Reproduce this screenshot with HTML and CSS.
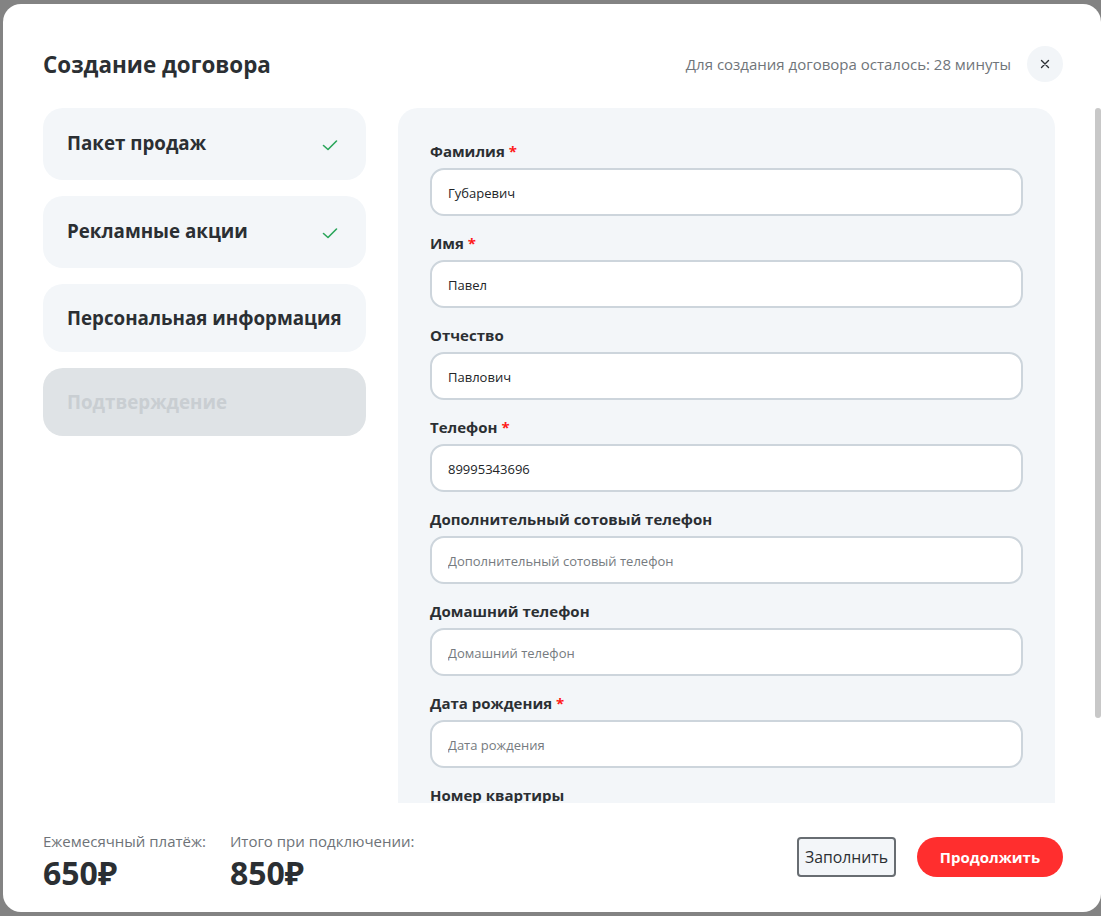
FILE: index.html
```html
<!DOCTYPE html>
<html lang="ru">
<head>
<meta charset="utf-8">
<title>Создание договора</title>
<link rel="stylesheet" href="styles.css">
</head>
<body>
<div class="modal">
  <header class="modal-header">
    <h1 class="title">Создание договора</h1>
    <div class="header-right">
      <span class="timer">Для создания договора осталось: 28 минуты</span>
      <button class="close" aria-label="Закрыть">
        <svg width="10" height="10" viewBox="0 0 10 10"><path d="M1.5 1.5 L8.5 8.5 M8.5 1.5 L1.5 8.5" stroke="#2b2f33" stroke-width="1.4" stroke-linecap="round"/></svg>
      </button>
    </div>
  </header>

  <div class="modal-body">
    <nav class="steps">
      <div class="step done"><span>Пакет продаж</span>
        <svg class="check" width="16" height="28" viewBox="0 0 16 28"><path d="M1.5 14.5 L6 18.5 L14.5 10" fill="none" stroke="#2aa55a" stroke-width="1.6" stroke-linecap="round" stroke-linejoin="round"/></svg>
      </div>
      <div class="step done"><span>Рекламные акции</span>
        <svg class="check" width="16" height="28" viewBox="0 0 16 28"><path d="M1.5 14.5 L6 18.5 L14.5 10" fill="none" stroke="#2aa55a" stroke-width="1.6" stroke-linecap="round" stroke-linejoin="round"/></svg>
      </div>
      <div class="step"><span>Персональная информация</span></div>
      <div class="step disabled"><span>Подтверждение</span></div>
    </nav>

    <div class="scroll-area">
      <form class="panel">
        <div class="field">
          <label class="label">Фамилия <span class="req">*</span></label>
          <input class="input" type="text" value="Губаревич">
        </div>
        <div class="field">
          <label class="label">Имя <span class="req">*</span></label>
          <input class="input" type="text" value="Павел">
        </div>
        <div class="field">
          <label class="label">Отчество</label>
          <input class="input" type="text" value="Павлович">
        </div>
        <div class="field">
          <label class="label">Телефон <span class="req">*</span></label>
          <input class="input" type="text" value="89995343696">
        </div>
        <div class="field">
          <label class="label">Дополнительный сотовый телефон</label>
          <input class="input" type="text" placeholder="Дополнительный сотовый телефон">
        </div>
        <div class="field">
          <label class="label">Домашний телефон</label>
          <input class="input" type="text" placeholder="Домашний телефон">
        </div>
        <div class="field">
          <label class="label">Дата рождения <span class="req">*</span></label>
          <input class="input" type="text" placeholder="Дата рождения">
        </div>
        <div class="field">
          <label class="label">Номер квартиры</label>
          <input class="input" type="text" placeholder="Номер квартиры">
        </div>
      </form>
    </div>
  </div>

  <footer class="modal-footer">
    <div class="totals">
      <div class="total">
        <div class="total-label">Ежемесячный платёж:</div>
        <div class="total-value">650₽</div>
      </div>
      <div class="total">
        <div class="total-label">Итого при подключении:</div>
        <div class="total-value">850₽</div>
      </div>
    </div>
    <div class="actions">
      <button class="btn-fill">Заполнить</button>
      <button class="btn-next">Продолжить</button>
    </div>
  </footer>

  <div class="scrollbar-thumb"></div>
</div>
</body>
</html>
```

FILE: styles.css
```css
* { box-sizing: border-box; }

html, body {
  margin: 0;
  height: 100%;
}

body {
  background: #838383;
  padding: 4px 0 0 3px;
  font-family: "Open Sans", "Noto Sans", sans-serif;
  color: #2b2f33;
  overflow: hidden;
}

.modal {
  position: relative;
  width: 1098px;
  height: 908px;
  background: #ffffff;
  border-radius: 18px;
  padding: 42px 38px 0 40px;
  display: flex;
  flex-direction: column;
  overflow: hidden;
}

.modal-header {
  display: flex;
  align-items: center;
  justify-content: space-between;
  height: 36px;
  margin-bottom: 26px;
}

.title {
  margin: 0;
  font-size: 22.4px;
  line-height: 30px;
  font-weight: 700;
  color: #2b2f33;
  padding-top: 2px;
}

.header-right {
  display: flex;
  align-items: center;
  gap: 16px;
}

.timer {
  font-size: 15px;
  color: #70757a;
  padding-bottom: 1px;
}

.close {
  width: 36px;
  height: 36px;
  border-radius: 50%;
  border: none;
  background: #f2f5f8;
  display: flex;
  align-items: center;
  justify-content: center;
  padding: 0;
}

.modal-body {
  height: 695px;
  display: grid;
  grid-template-columns: 323px 657px;
  column-gap: 32px;
  overflow: hidden;
}

.steps {
  display: flex;
  flex-direction: column;
  gap: 16px;
  align-self: start;
}

.step {
  background: #f3f6f9;
  border-radius: 20px;
  padding: 22px 28px 22px 24px;
  display: flex;
  align-items: center;
  justify-content: space-between;
  font-size: 18.75px;
  line-height: 24px;
  font-weight: 700;
  color: #2b2f33;
  white-space: nowrap;
}

.step.done { padding-top: 21px; padding-bottom: 23px; }
.step.done .check { margin-top: 2px; margin-bottom: -2px; }

.step.disabled {
  background: #dfe3e6;
  color: #c9ced2;
}

.check { display: block; }

.scroll-area {
  overflow: hidden;
}

.panel {
  background: #f3f6f9;
  border-radius: 20px 20px 0 0;
  padding: 32px 32px 32px 32px;
  display: flex;
  flex-direction: column;
  gap: 16px;
}

.field {
  display: flex;
  flex-direction: column;
}

.label {
  font-size: 15px;
  line-height: 22px;
  font-weight: 700;
  color: #2b2f33;
  margin-bottom: 6px;
}

.req {
  color: #ff1a1a;
}

.input {
  height: 48px;
  width: 100%;
  border: 2px solid #cdd5dc;
  border-radius: 14px;
  background: #ffffff;
  padding: 1px 16px 0;
  font-family: "Open Sans", "Noto Sans", sans-serif;
  font-size: 13px;
  color: #222528;
  outline: none;
}

.input::placeholder {
  color: #767b80;
}

.modal-footer {
  flex: 1;
  display: flex;
  align-items: center;
  justify-content: space-between;
  padding-bottom: 2px;
}

.totals {
  display: flex;
  gap: 24px;
  padding-top: 10px;
}

.total-label {
  font-size: 15px;
  line-height: 20px;
  color: #6e7378;
  margin-bottom: 2px;
}

.total-value {
  font-size: 32px;
  line-height: 40px;
  font-weight: 700;
  color: #2b2f33;
}

.actions {
  display: flex;
  align-items: center;
  gap: 21px;
}

.btn-fill {
  height: 40px;
  width: 99px;
  border: 2px solid #686d72;
  border-radius: 4px;
  background: #f3f6f9;
  font-family: "Open Sans", "Noto Sans", sans-serif;
  font-size: 15.8px;
  font-weight: 500;
  color: #2b2f33;
  padding: 0;
}

.btn-next {
  height: 40px;
  width: 146px;
  border: none;
  border-radius: 20px;
  background: #ff2e2e;
  font-family: "Open Sans", "Noto Sans", sans-serif;
  font-size: 15px;
  font-weight: 700;
  color: #ffffff;
  padding: 0;
}

.scrollbar-thumb {
  position: absolute;
  right: 0;
  top: 104px;
  width: 6px;
  height: 610px;
  background: #c8c8c8;
  border-radius: 3px;
}
```
